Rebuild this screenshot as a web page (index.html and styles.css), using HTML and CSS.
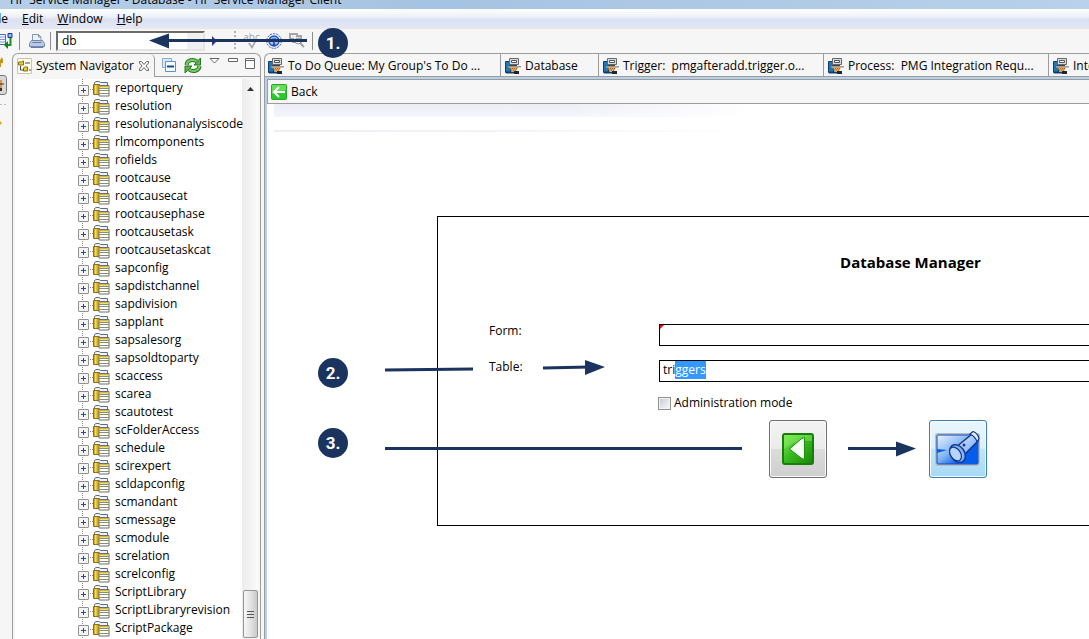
FILE: index.html
```html
<!DOCTYPE html>
<html lang="en">
<head>
<meta charset="utf-8">
<title>HP Service Manager - Database - HP Service Manager Client</title>
<link rel="stylesheet" href="styles.css">
</head>
<body>
<svg class="sprites" aria-hidden="true">
  <symbol id="i-table" viewBox="0 0 17 17">
    <path d="M1.500 4.500V2.500L3 1.500h3l1.500 1H14.500V5" fill="#eef4fb" stroke="#5e6b80"/>
    <path d="M.5 4.500h6v10h-6z" fill="#d2ab22" stroke="#8d7110"/><path d="M2 5h1.500v9H2z" fill="#f3dc62"/>
    <path d="M6 5.500h10v10.500H6z" fill="#fff" stroke="#6b6f62"/>
    <path d="M6.500 6h9v1.500h-9z" fill="#d8b935"/>
    <path d="M6 8.500h10M6 10.500h10M6 13.500h10" stroke="#8b8d70" fill="none"/>
  </symbol>
  <symbol id="i-term" viewBox="0 0 16 16">
    <path d="M.5 3.500h5v11h-5z" fill="#1b7ab5" stroke="#123c6c"/><path d="M1 14.500h9" stroke="#123c6c" stroke-width="2"/>
    <path d="M4.500.5h9v6h-9z" fill="#d9dcde" stroke="#65696c"/><path d="M6.500 2.500h5v2h-5z" fill="#fff" stroke="#555"/>
    <path d="M3 8h13v1.500H3z" fill="#999"/><path d="M4 7h8v1H4z" fill="#444"/>
    <path d="M4 9h9l-1 3-2 2H7z" fill="#dda566"/><path d="M5 10.500h7M6 12h5" stroke="#9b6830" stroke-dasharray="1 1"/>
    <path d="M9 13h5v3H9z" fill="#24252a"/>
  </symbol>
</svg>

<header class="titlebar"><span>HP Service Manager - Database - HP Service Manager Client</span></header>
<nav class="menubar">
  <button class="menu menu-cut" type="button">File</button>
  <button class="menu" type="button"><u>E</u>dit</button>
  <button class="menu" type="button"><u>W</u>indow</button>
  <button class="menu" type="button"><u>H</u>elp</button>
</nav>
<div class="toolbar">
  <button class="tool tool-save" type="button" aria-label="Connections"><svg width="13" height="16" viewBox="0 0 13 16"><path d="M0 1.500h5.500v10H0" fill="#f4f8ff" stroke="#4b6aac"/><path d="M0 4h5M0 6.500h5M0 9h5" stroke="#7d9bd0"/><path d="M8 .5h4v4H8z" fill="#8fb2f2" stroke="#123a9e"/><path d="M10.500 5v7H6" fill="none" stroke="#19902a" stroke-width="2"/><path d="M4 12l4-4v8z" fill="#128023"/></svg></button>
  <span class="bar"></span>
  <button class="tool tool-print" type="button" aria-label="Print"><svg width="16" height="16" viewBox="0 0 16 16"><path d="M3.500 8V1.500h6l2.500 2.500v4" fill="#eaf2fb" stroke="#8195b5"/><path d="M9.500 1.500V4H12" fill="none" stroke="#8195b5"/><path d="M2.500 7.500h11l2 3v3H.5v-3z" fill="#b7cbe4" stroke="#7589ac"/><path d="M2 13.500v1h12v-1M3.500 9.500h9" fill="none" stroke="#677fa8"/></svg></button>
  <span class="bar"></span>
  <div class="combo"><input type="text" value="db" aria-label="Command"><button type="button" aria-label="Command history"><i></i></button></div>
  <button class="tool tool-run" type="button" aria-label="Execute command"><svg width="5" height="10" viewBox="0 0 5 10"><path d="M0 0l5 5-5 5z" fill="#33339b"/></svg></button>
  <span class="bar bar-dots"></span>
  <button class="tool tool-abc" type="button" aria-label="Check spelling"><span>abc</span><svg width="8" height="7" viewBox="0 0 8 7"><path d="M0 1l2 0 2 3 2-4h2L4 7z" fill="#a5a5a5"/></svg></button>
  <button class="tool tool-net" type="button" aria-label="Connection status"><svg width="16" height="16" viewBox="0 0 16 16"><circle cx="8" cy="8" r="7.300" fill="#fff" stroke="#2a48c4" stroke-dasharray="2 1"/><circle cx="8" cy="8" r="5" fill="#a9ccf8" stroke="#1c51c5" stroke-width="1.500"/><circle cx="8" cy="7" r="2.500" fill="#3f92ec"/><path d="M6 13l2-5 2 5z" fill="#214bb9"/></svg></button>
  <button class="tool tool-find" type="button" aria-label="Inspect"><svg width="16" height="15" viewBox="0 0 16 15"><path d="M1 1h7v2h4v6H4V6H1z" fill="#eee" stroke="#a6a6a6" stroke-width="2"/><circle cx="9" cy="8" r="3" fill="#e8e8e8" stroke="#999"/><path d="M11 10l4 4" stroke="#a4a4a4" stroke-width="2"/></svg></button>
  <span class="bar"></span>
</div>

<div class="workspace">
  <aside class="fastbar" aria-hidden="true">
    <svg width="8" height="74" viewBox="0 0 8 74"><path d="M0 7l2-3 1 3v3H1v4H0z" fill="#c89418"/><path d="M-1 22.500h5q2.500 0 2.500 3v13q0 3-2.500 3h-5z" fill="#d7d7d7" stroke="#777"/><path d="M0 27h2v9H0z" fill="#dc9444"/><path d="M0 35h2v3H0z" fill="#333"/><path d="M0 31h4" stroke="#333"/><path d="M0 51.500h6" stroke="#bbb" stroke-dasharray="2 2"/><path d="M0 68l2 2-2 2z" fill="#dfaa18"/></svg>
  </aside>
  <section class="navigator">
    <div class="nav-head">
      <div class="nav-tab">
        <svg width="15" height="16" viewBox="0 0 15 16"><path d="M.5 .5h14v15H.5z" fill="#fffef0" stroke="#c9c7a5"/><path d="M1.500 4h3l1-1h1v4h-5zM6.500 10l1-1h3v4h-4z" fill="#edcc33" stroke="#8a6d10"/><path d="M3.500 8v4h3M8 5h5M12 12h2" fill="none" stroke="#3a4654"/></svg>
        <span>System Navigator</span>
        <button class="tool" type="button" aria-label="Close"><svg width="12" height="12" viewBox="0 0 12 12"><path d="M1.500 1.500h2l2.500 3 2.500-3h2v1.500L8 6l2.500 3v1.500h-2L6 7.500l-2.500 3h-2V9L4 6 1.500 3z" fill="#fff" stroke="#666"/></svg></button>
      </div>
      <div class="nav-tools">
        <button class="tool" type="button" aria-label="Collapse all"><svg width="14" height="15" viewBox="0 0 14 15"><path d="M.5 .5h9v9h-9z" fill="#dbeaf8" stroke="#8daccb"/><path d="M3.500 3.500h10v10h-10z" fill="#f5fbff" stroke="#5f91bb"/><path d="M5 8.500h7" stroke="#154d93" stroke-width="2"/></svg></button>
        <button class="tool" type="button" aria-label="Refresh"><svg width="18" height="17" viewBox="0 0 18 17"><path d="M2.500 8C3 3 9 1.500 13 4.500M15.500 9C15 14 9 15.500 5 12.500" fill="none" stroke="#28752a" stroke-width="4"/><path d="M16.500 1v7H10zM1 16V9h7z" fill="#5bb548" stroke="#28752a"/><path d="M2.500 8C3 3 9 1.500 13 4.500M15.500 9C15 14 9 15.500 5 12.500" fill="none" stroke="#78cd5f" stroke-width="2"/></svg></button>
        <button class="tool high" type="button" aria-label="View menu"><svg width="11" height="6" viewBox="0 0 11 6"><path d="M1 .5h9L5.500 5z" fill="#fff" stroke="#666"/></svg></button>
        <button class="tool high" type="button" aria-label="Minimize"><svg width="10" height="4" viewBox="0 0 10 4"><path d="M.5 .5h9v3h-9z" fill="#fff" stroke="#666"/></svg></button>
        <button class="tool high" type="button" aria-label="Maximize"><svg width="10" height="11" viewBox="0 0 10 11"><path d="M.5 .5h9v10h-9zM0 2.500h10" fill="#fff" stroke="#666"/></svg></button>
      </div>
    </div>
    <div class="nav-body">
      <ul class="tree">
        <li><svg><use href="#i-table"/></svg>reportquery</li>
        <li><svg><use href="#i-table"/></svg>resolution</li>
        <li><svg><use href="#i-table"/></svg>resolutionanalysiscode</li>
        <li><svg><use href="#i-table"/></svg>rlmcomponents</li>
        <li><svg><use href="#i-table"/></svg>rofields</li>
        <li><svg><use href="#i-table"/></svg>rootcause</li>
        <li><svg><use href="#i-table"/></svg>rootcausecat</li>
        <li><svg><use href="#i-table"/></svg>rootcausephase</li>
        <li><svg><use href="#i-table"/></svg>rootcausetask</li>
        <li><svg><use href="#i-table"/></svg>rootcausetaskcat</li>
        <li><svg><use href="#i-table"/></svg>sapconfig</li>
        <li><svg><use href="#i-table"/></svg>sapdistchannel</li>
        <li><svg><use href="#i-table"/></svg>sapdivision</li>
        <li><svg><use href="#i-table"/></svg>sapplant</li>
        <li><svg><use href="#i-table"/></svg>sapsalesorg</li>
        <li><svg><use href="#i-table"/></svg>sapsoldtoparty</li>
        <li><svg><use href="#i-table"/></svg>scaccess</li>
        <li><svg><use href="#i-table"/></svg>scarea</li>
        <li><svg><use href="#i-table"/></svg>scautotest</li>
        <li><svg><use href="#i-table"/></svg>scFolderAccess</li>
        <li><svg><use href="#i-table"/></svg>schedule</li>
        <li><svg><use href="#i-table"/></svg>scirexpert</li>
        <li><svg><use href="#i-table"/></svg>scldapconfig</li>
        <li><svg><use href="#i-table"/></svg>scmandant</li>
        <li><svg><use href="#i-table"/></svg>scmessage</li>
        <li><svg><use href="#i-table"/></svg>scmodule</li>
        <li><svg><use href="#i-table"/></svg>screlation</li>
        <li><svg><use href="#i-table"/></svg>screlconfig</li>
        <li><svg><use href="#i-table"/></svg>ScriptLibrary</li>
        <li><svg><use href="#i-table"/></svg>ScriptLibraryrevision</li>
        <li><svg><use href="#i-table"/></svg>ScriptPackage</li>
        <li><svg><use href="#i-table"/></svg></li>
      </ul>
      <div class="scrollbar" aria-hidden="true">
        <svg width="7" height="4" viewBox="0 0 7 4"><path d="M0 4l3.500-4L7 4z" fill="#333"/></svg>
        <div class="thumb"><i></i><i></i><i></i></div>
      </div>
    </div>
  </section>

  <main class="editor">
    <div class="tabs">
      <button class="tab w-queue" type="button"><svg><use href="#i-term"/></svg>To Do Queue: My Group's To Do ...</button>
      <button class="tab w-db" type="button"><svg><use href="#i-term"/></svg>Database</button>
      <button class="tab w-doc" type="button"><svg><use href="#i-term"/></svg>Trigger:  pmgafteradd.trigger.o...</button>
      <button class="tab w-doc" type="button"><svg><use href="#i-term"/></svg>Process:  PMG Integration Requ...</button>
      <button class="tab w-doc" type="button"><svg><use href="#i-term"/></svg>Integration</button>
    </div>
    <div class="pane">
      <div class="backbar">
        <button class="back" type="button"><svg width="16" height="16" viewBox="0 0 16 16"><rect x=".5" y=".5" width="15" height="15" rx="1" fill="#2cc92c" stroke="#25a925"/><path d="M1 1h14v5L1 10z" fill="#62dd5a"/><path d="M14 8H3M8 3L3 8l5 5" fill="none" stroke="#fff" stroke-width="2"/></svg>Back</button>
      </div>
      <div class="banner"></div>
      <form class="frame">
        <h1>Database Manager</h1>
        <div class="row"><label for="form">Form:</label><div class="field required"><input id="form" type="text"></div></div>
        <div class="row"><label for="table">Table:</label><div class="field"><input id="table" type="text" value="triggers"></div></div>
        <label class="check"><input type="checkbox">Administration mode</label>
        <div class="actions">
          <button class="big" type="button" aria-label="Back"><svg width="32" height="32" viewBox="0 0 32 32"><defs><linearGradient id="g" x2="1" y2="1"><stop stop-color="#82ed58"/><stop offset=".5" stop-color="#35b91e"/><stop offset="1" stop-color="#158505"/></linearGradient></defs><rect x="1" y="1" width="30" height="30" rx="2" fill="url(#g)" stroke="#197d0c" stroke-width="2"/><path d="M2 2h28v6Q12 6 2 16z" fill="#8cee67" opacity=".45"/><path d="M22.500 4.500v22L19 25 7.500 16 19 6z" fill="#f3fff0" stroke="#208e13"/></svg></button>
          <button class="big active" type="button" aria-label="Search"><svg width="46" height="36" viewBox="0 0 46 36"><defs><linearGradient id="b" x2="1" y2="1"><stop stop-color="#f0f8ff"/><stop offset=".45" stop-color="#82b5f4"/><stop offset=".7" stop-color="#1163eb"/><stop offset="1" stop-color="#0035bb"/></linearGradient><linearGradient id="c" x2="1" y2="1"><stop stop-color="#eef6ff"/><stop offset="1" stop-color="#5b9af4"/></linearGradient></defs><rect x="1" y="3" width="43" height="31" rx="2" fill="url(#b)" stroke="#b9bec5" stroke-width="2"/><rect x="2" y="4" width="41" height="29" rx="1" fill="none" stroke="#174bb7"/><path d="M2 18l10 1-10 3zM22 20l21-8v21H22z" fill="#075ceb"/><path d="M20 17L37 3l6 7-16 16z" fill="url(#c)" stroke="#17368b" stroke-width="1.500"/><path d="M35 3l3-2.500q5 2 6 7L42 11q-1-5-7-8z" fill="#e1eeff" stroke="#17368b" stroke-width="1.200"/><ellipse cx="22.500" cy="22.500" rx="7" ry="9.500" transform="rotate(-35 22.500 22.500)" fill="#81b2f5" stroke="#17368b" stroke-width="1.500"/><ellipse cx="20.500" cy="23" rx="5" ry="7.500" transform="rotate(-35 20.500 23)" fill="#b6d5fa" stroke="#17368b" stroke-width="1.200"/><circle cx="29" cy="14" r="1.500" fill="#17368b"/></svg></button>
        </div>
      </form>
    </div>
  </main>
</div>

<svg class="callouts" width="1000" height="500" viewBox="0 0 1000 500" role="img" aria-label="Steps 1 to 3">
  <g stroke="#1b335f" stroke-width="3"><path d="M166 40.500H307M385 370l88-1M543 368l46-1M385 448.500H742M848 448.500h52"/></g>
  <g fill="#1b335f"><path d="M149 40.500l20-7v15zM605 367l-20-7v15zM916 448.500l-20-7v15z"/><circle cx="333" cy="43" r="15"/><circle cx="333" cy="373" r="15"/><circle cx="333" cy="443" r="15"/></g>
  <g class="nums"><text x="333" y="49">1.</text><text x="333" y="379">2.</text><text x="333" y="449">3.</text></g>
</svg>
<script src="main.js"></script>
</body>
</html>
```
FILE: styles.css
```css
* { box-sizing: border-box; }
body {
  margin: 0; height: 100vh; overflow: hidden; position: relative;
  display: flex; flex-direction: column; background: #f6f6f6; color: #000;
  font: 12px/18px "Open Sans", "Noto Sans", sans-serif;
}
button, input { font: inherit; color: inherit; }
button { background: none; border: 0; padding: 0; text-align: left; }
svg { display: block; flex: none; }
.sprites { position: absolute; width: 0; height: 0; }

.titlebar { flex: none; height: 9px; overflow: hidden; display: flex; align-items: flex-end; padding-left: 10px; background: linear-gradient(90deg, #b6cee7, #a5c3e2 40%, #b9d1ea); white-space: nowrap; }
.menubar { flex: none; height: 19px; display: flex; gap: 14px; align-items: center; overflow: hidden; background: linear-gradient(#fff, #eef1fa 40%, #dbe1f2 55%, #e3e7f6); }
.menu-cut { width: 8px; display: flex; justify-content: flex-end; }

.toolbar { flex: none; height: 25px; display: flex; align-items: center; padding-bottom: 1px; border-top: 1px solid #e6e6e6; }
.bar { width: 1px; height: 18px; background: #8c8c8c; }
.bar-dots { width: 2px; height: 20px; margin: 0 7px 0 17px; background: repeating-linear-gradient(#b5b5b5 0 2px, transparent 2px 4px); }
.tool-save { margin-right: 6px; }
.tool-print { margin: 0 5px 0 9px; }
.combo { display: flex; width: 149px; height: 20px; margin: 0 7px 0 5px; background: #fff; border: 2px solid; border-color: #6b6b6b #e3e3e3 #e3e3e3 #6b6b6b; }
.combo input { flex: 1; min-width: 0; border: 0; padding: 0 4px; background: none; outline: 0; line-height: 16px; }
.combo button { width: 16px; background: #f0f0f0; display: flex; justify-content: center; }
.combo i { width: 8px; height: 1px; margin-top: 6px; background: #333; }
.tool-abc { display: flex; flex-direction: column; align-items: center; width: 17px; color: #a0a0a0; font-size: 10px; line-height: 9px; }
.tool-net { margin: 0 7px 0 6px; }
.tool-find { margin-right: 7px; }

.workspace { flex: 1; min-height: 0; display: flex; }
.fastbar { flex: none; width: 12px; }
.navigator { flex: none; width: 249px; display: flex; flex-direction: column; border: 1px solid #9c9c9c; border-bottom: 0; border-radius: 6px 6px 0 0; padding: 0 2px; }
.nav-head { flex: none; height: 25px; display: flex; align-items: flex-start; }
.nav-tab { display: flex; align-items: center; gap: 4px; width: 140px; height: 23px; padding: 0 5px 0 2px; border-right: 1px solid #9c9c9c; border-radius: 0 5px 0 0; white-space: nowrap; }
.nav-tab .tool { margin-left: auto; }
.nav-tools { flex: 1; display: flex; align-items: center; justify-content: space-between; padding: 0 5px 0 7px; margin-right: -2px; border-bottom: 1px solid #9c9c9c; height: 23px; }
.nav-tools .high { align-self: flex-start; margin-top: 4px; }
.nav-body { flex: 1; min-height: 0; overflow: hidden; display: flex; background: #fff; }
.tree { flex: 1; min-width: 0; margin: 0; padding: 0 0 0 68px; list-style: none; background: repeating-linear-gradient(#888 0 1px, #fff 1px 2px) 67px 0 / 1px 100% no-repeat; }
.tree li { height: 18px; display: flex; align-items: center; gap: 5px; white-space: nowrap; position: relative; padding-left: 10px; }
.tree svg { width: 17px; height: 17px; }
.tree li::before { content: ""; position: absolute; left: -5px; top: 6px; width: 9px; height: 9px; border: 1px solid #919191; border-radius: 1px; background: linear-gradient(#2f4a8c, #2f4a8c) center / 5px 1px no-repeat, linear-gradient(#2f4a8c, #2f4a8c) center / 1px 5px no-repeat, #f5f5f5; }
.tree li::after { content: ""; position: absolute; left: 5px; top: 10px; width: 5px; height: 1px; background: repeating-linear-gradient(90deg, #888 0 1px, #fff 1px 2px); }
.scrollbar { flex: none; width: 16px; display: flex; flex-direction: column; align-items: center; padding: 8px 0 1px; background: linear-gradient(90deg, #ececec, #fafafa); }
.thumb { margin-top: auto; width: 15px; height: 48px; border: 1px solid #969696; border-radius: 2px; background: linear-gradient(90deg, #f7f7f7, #e3e3e3 50%, #c9c9c9); display: flex; flex-direction: column; gap: 2px; align-items: center; justify-content: center; }
.thumb i { width: 7px; height: 1px; background: #555; }

.editor { flex: 1; min-width: 0; margin-left: 3px; display: flex; flex-direction: column; overflow: clip; border: 1px solid #9c9c9c; border-width: 1px 0 0 1px; border-radius: 6px 0 0 0; }
.tabs { flex: none; height: 23px; display: flex; border-bottom: 1px solid #9c9c9c; }
.tab { flex: none; display: flex; align-items: center; gap: 4px; padding: 1px 0 0 4px; border-right: 1px solid #9c9c9c; white-space: pre; overflow: hidden; }
.tab svg { width: 16px; height: 16px; }
.w-queue { width: 236px; padding-left: 3px; }
.w-db { width: 98px; }
.w-doc { width: 225px; }
.pane { flex: 1; min-height: 0; overflow: clip; border: solid #b7d0ea; border-width: 2px 0 0 2px; background: #fff; }
.backbar { height: 25px; display: flex; border: 1px solid #9c9c9c; border-right: 0; background: #f6f6f6; }
.back { display: flex; align-items: center; gap: 4px; padding-left: 3px; }
.banner { height: 28px; margin-left: 7px; width: 476px; background: linear-gradient(90deg, #ededf5, #f3f4fb 50%, #fff) 0 100% / 100% 2px no-repeat, linear-gradient(90deg, transparent 60%, #fff), linear-gradient(#ededf5, #f4f6fd) 0 0 / 100% 13px no-repeat; }

.frame { margin: 84px -295px 0 170px; border: 1px solid #000; padding: 36px 0 47px 51px; }
.frame h1 { margin: 0 0 53px -51px; text-align: center; font-size: 15px; line-height: 18px; font-weight: 700; }
.row { display: flex; align-items: flex-start; margin-bottom: 14px; height: 22px; }
.row label { width: 170px; line-height: 14px; }
.field { flex: 1; position: relative; height: 22px; border: 1px solid #000; display: flex; align-items: flex-start; }
.field input { width: 100%; height: 18px; padding: 0 3px; border: 0; outline: 0; background: none; line-height: 18px; }
.field input::selection { background: #3399ff; color: #fff; }
.required::before { content: ""; position: absolute; left: 0; top: 0; border: 2px solid; border-color: #f00 transparent transparent #f00; }
.check { display: flex; align-items: center; gap: 3px; margin-left: 169px; width: max-content; height: 14px; }
.check input { appearance: none; width: 13px; height: 13px; margin: 0; border: 1px solid #8e8f8f; background: linear-gradient(135deg, #c9cdd2, #f6f6f6) center / 9px 9px no-repeat #f4f4f4; }
.actions { display: flex; gap: 102px; margin: 10px 0 0 280px; }
.big { width: 58px; height: 58px; display: flex; align-items: center; justify-content: center; border: 1px solid #707070; border-radius: 3px; background: linear-gradient(#f3f3f3, #ebebeb 49%, #dcdcdc 50%, #cfcfcf); box-shadow: inset 0 0 0 1px #fafafa; }
.big.active { border-color: #3c7fb1; background: linear-gradient(#eaf6fd, #d9f0fc 49%, #bee6fd 50%, #a7d9f5); }

.callouts { position: absolute; left: 0; top: 0; pointer-events: none; }
.nums { font: 700 17px Roboto, sans-serif; fill: #fff; text-anchor: middle; }
```
FILE: main.js
```js
const table = document.getElementById("table");
table.focus({ preventScroll: true });
table.setSelectionRange(3, table.value.length);
```
